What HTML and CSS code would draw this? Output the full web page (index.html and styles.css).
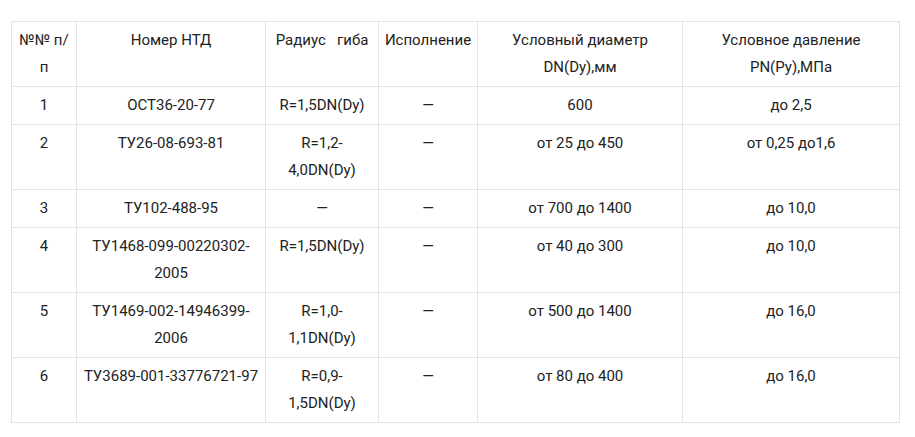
FILE: index.html
```html
<!DOCTYPE html>
<html lang="ru">
<head>
<meta charset="utf-8">
<title>Таблица</title>
<link rel="stylesheet" href="styles.css">
</head>
<body>
<div class="wrap">
<table class="spec">
<colgroup>
<col class="c1"><col class="c2"><col class="c3"><col class="c4"><col class="c5"><col class="c6">
</colgroup>
<tbody>
<tr><td>№№ п/ п</td><td>Номер НТД</td><td>Радиус&nbsp;&nbsp; гиба</td><td>Исполнение</td><td>Условный диаметр DN(Dy),мм</td><td>Условное давление PN(Py),МПа</td></tr>
<tr><td>1</td><td>ОСТ36-20-77</td><td>R=1,5DN(Dy)</td><td>—</td><td>600</td><td>до 2,5</td></tr>
<tr><td>2</td><td>ТУ26-08-693-81</td><td>R=1,2-4,0DN(Dy)</td><td>—</td><td>от 25 до 450</td><td>от 0,25 до1,6</td></tr>
<tr><td>3</td><td>ТУ102-488-95</td><td>—</td><td>—</td><td>от 700 до 1400</td><td>до 10,0</td></tr>
<tr><td>4</td><td>ТУ1468-099-00220302-2005</td><td>R=1,5DN(Dy)</td><td>—</td><td>от 40 до 300</td><td>до 10,0</td></tr>
<tr><td>5</td><td>ТУ1469-002-14946399-2006</td><td>R=1,0-1,1DN(Dy)</td><td>—</td><td>от 500 до 1400</td><td>до 16,0</td></tr>
<tr><td>6</td><td>ТУ3689-001-33776721-97</td><td>R=0,9-1,5DN(Dy)</td><td>—</td><td>от 80 до 400</td><td>до 16,0</td></tr>
</tbody>
</table>
</div>
</body>
</html>
```
FILE: styles.css
```css
html, body {
  margin: 0;
  background: #fff;
}
.wrap {
  padding: 21px 15px 0 11px;
}
.spec {
  border-collapse: collapse;
  table-layout: fixed;
  width: 889px;
  font-family: Roboto, "Liberation Sans", sans-serif;
  font-size: 15px;
  line-height: 27px;
  color: #222;
}
.c1 { width: 65px; }
.c2 { width: 189px; }
.c3 { width: 113px; }
.c4 { width: 99px; }
.c5 { width: 205px; }
.c6 { width: 217px; }
.spec td {
  border: 1px solid #e3e3e3;
  padding: 5px;
  text-align: center;
  vertical-align: top;
}
```
